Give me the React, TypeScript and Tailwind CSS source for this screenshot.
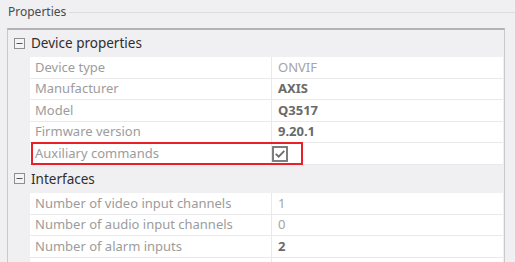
import { Fragment } from "react";

type Row = { label: string; value?: string; bold?: boolean; check?: boolean; highlight?: boolean };

const GROUPS: { title: string; rows: Row[] }[] = [
  {
    title: "Device properties",
    rows: [
      { label: "Device type", value: "ONVIF" },
      { label: "Manufacturer", value: "AXIS", bold: true },
      { label: "Model", value: "Q3517", bold: true },
      { label: "Firmware version", value: "9.20.1", bold: true },
      { label: "Auxiliary commands", check: true, highlight: true },
    ],
  },
  {
    title: "Interfaces",
    rows: [
      { label: "Number of video input channels", value: "1" },
      { label: "Number of audio input channels", value: "0" },
      { label: "Number of alarm inputs", value: "2", bold: true },
      { label: "Number of alarm outputs", value: "2", bold: true },
    ],
  },
];

const MinusBox = () => (
  <svg width="11" height="11" viewBox="0 0 11 11" className="block">
    <rect x="0.5" y="0.5" width="10" height="10" fill="#f4f4f4" stroke="#8f8f8f" />
    <path d="M2.5 5.5h6" stroke="#555" strokeWidth="1" />
  </svg>
);

const CheckBox = () => (
  <svg width="16" height="16" viewBox="0 0 16 16" className="block">
    <rect x="1" y="1" width="14" height="14" fill="#fff" stroke="#707070" strokeWidth="1.8" />
    <path d="M3.8 7.8l2.9 2.9 5.6-5.8" fill="none" stroke="#6c6c6c" strokeWidth="1.8" />
  </svg>
);

export default function App() {
  return (
    <div className="w-[515px] h-[262px] overflow-hidden bg-[#f0eff2] font-['Noto_Sans',sans-serif]">
      {/* group box caption */}
      <div className="flex items-center h-[24px] pl-[8px]">
        <span className="text-[12px] leading-none text-[#4a4a4a] pr-[3px]">Properties</span>
        <div className="flex-1 h-px bg-[#dcdbde]" />
      </div>

      <div className="mt-[4px] ml-[7px] mr-[10px] border-t-2 border-l border-r border-[#c9c8cb] border-t-[#b3b2b5]">
        {GROUPS.map((g, gi) => (
          <Fragment key={g.title}>
            <div className={gi === 0 ? "flex items-center h-[27px]" : "flex items-center h-[28px]"}>
              <div className="w-[22px] flex justify-center">
                <MinusBox />
              </div>
              <span className="text-[13.5px] text-[#2e2e2e] pl-[1px]">{g.title}</span>
            </div>
            {g.rows.map((r) => (
              <div key={r.label} className="flex h-[21.6px] ml-[22px] mr-px">
                <div
                  className={
                    r.highlight
                      ? "relative flex flex-1 bg-white border-b border-[#e9e9eb]"
                      : "flex flex-1 bg-white border-b border-[#e9e9eb]"
                  }
                >
                  <div className="w-[242px] border-r border-[#e9e9eb] flex items-center pl-[5px] text-[13px] text-[#9c9c9c] whitespace-nowrap">
                    {r.label}
                  </div>
                  <div
                    className={
                      r.bold
                        ? "flex-1 flex items-center pl-[6px] text-[13px] font-bold text-[#6a6a6a]"
                        : "flex-1 flex items-center pl-[6px] text-[13px] text-[#a4a4a4]"
                    }
                  >
                    {r.check ? (
                      <div className="-ml-[6px]">
                        <CheckBox />
                      </div>
                    ) : (
                      r.value
                    )}
                  </div>
                  {r.highlight && (
                    <div className="absolute left-px top-[-1px] w-[272px] h-[23px] border-2 border-[#e8202a]" />
                  )}
                </div>
              </div>
            ))}
          </Fragment>
        ))}
      </div>
    </div>
  );
}
